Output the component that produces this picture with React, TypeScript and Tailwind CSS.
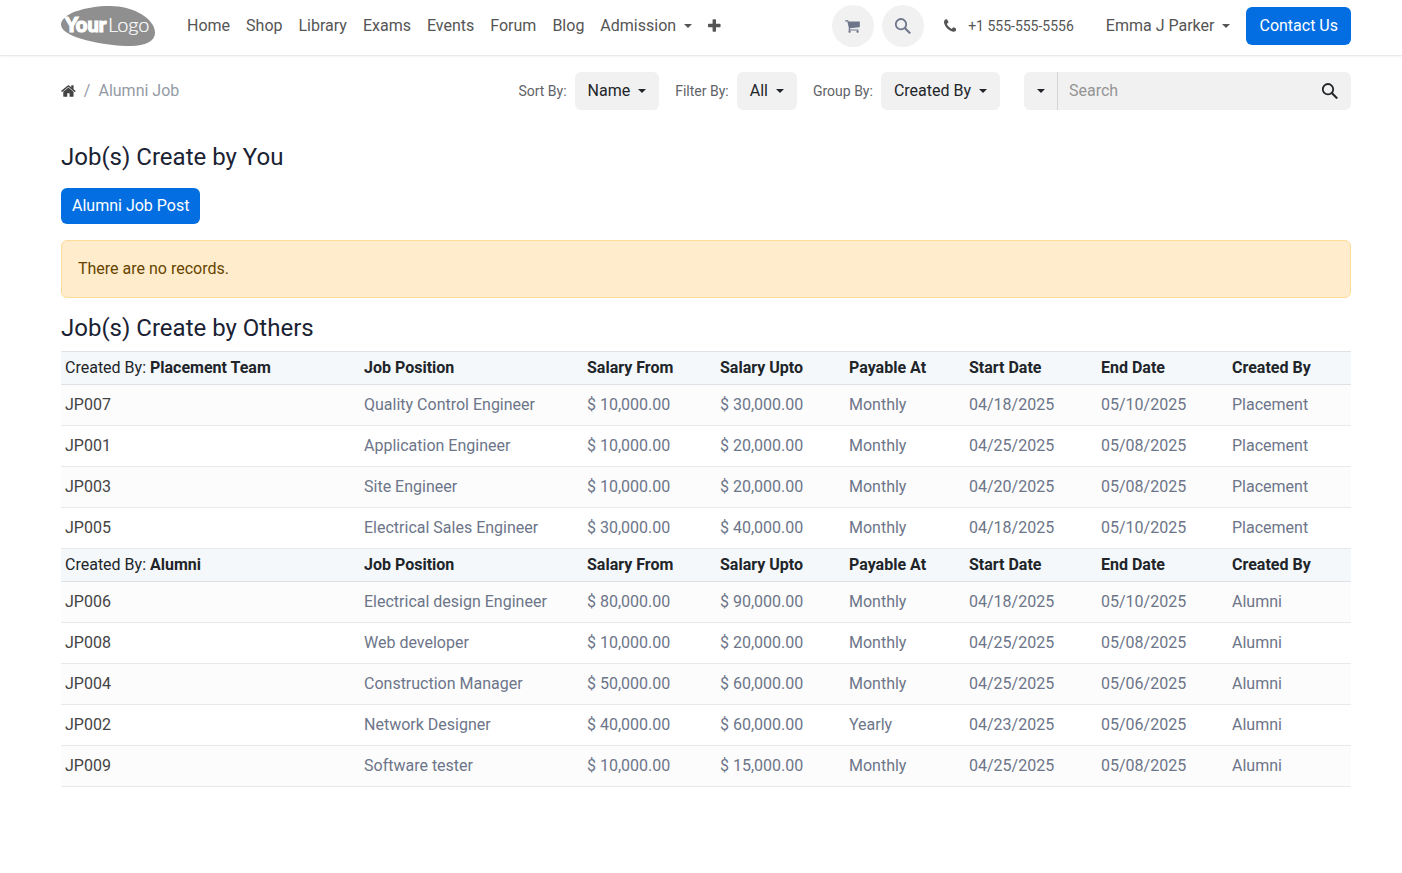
import React from "react";

type Job = {
  code: string;
  position: string;
  from: string;
  upto: string;
  payable: string;
  start: string;
  end: string;
};

type Group = { label: string; createdBy: string; jobs: Job[] };

const job = (
  code: string,
  position: string,
  from: string,
  upto: string,
  payable: string,
  start: string,
  end: string
): Job => ({ code, position, from, upto, payable, start, end });

const groups: Group[] = [
  {
    label: "Placement Team",
    createdBy: "Placement",
    jobs: [
      job("JP007", "Quality Control Engineer", "10,000.00", "30,000.00", "Monthly", "04/18/2025", "05/10/2025"),
      job("JP001", "Application Engineer", "10,000.00", "20,000.00", "Monthly", "04/25/2025", "05/08/2025"),
      job("JP003", "Site Engineer", "10,000.00", "20,000.00", "Monthly", "04/20/2025", "05/08/2025"),
      job("JP005", "Electrical Sales Engineer", "30,000.00", "40,000.00", "Monthly", "04/18/2025", "05/10/2025"),
    ],
  },
  {
    label: "Alumni",
    createdBy: "Alumni",
    jobs: [
      job("JP006", "Electrical design Engineer", "80,000.00", "90,000.00", "Monthly", "04/18/2025", "05/10/2025"),
      job("JP008", "Web developer", "10,000.00", "20,000.00", "Monthly", "04/25/2025", "05/08/2025"),
      job("JP004", "Construction Manager", "50,000.00", "60,000.00", "Monthly", "04/25/2025", "05/06/2025"),
      job("JP002", "Network Designer", "40,000.00", "60,000.00", "Yearly", "04/23/2025", "05/06/2025"),
      job("JP009", "Software tester", "10,000.00", "15,000.00", "Monthly", "04/25/2025", "05/08/2025"),
    ],
  },
];

const navLinks = ["Home", "Shop", "Library", "Exams", "Events", "Forum", "Blog"];
const columns = ["Job Position", "Salary From", "Salary Upto", "Payable At", "Start Date", "End Date", "Created By"];

const icons = {
  plus: {
    box: "192 0 1408 1792",
    path: "M1600 736v192q0 40-28 68t-68 28h-416v416q0 40-28 68t-68 28h-192q-40 0-68-28t-28-68v-416h-416q-40 0-68-28t-28-68v-192q0-40 28-68t68-28h416v-416q0-40 28-68t68-28h192q40 0 68 28t28 68v416h416q40 0 68 28t28 68z",
  },
  home: {
    box: "64 0 1664 1792",
    path: "M1472 992v480q0 26-19 45t-45 19h-384v-384h-256v384h-384q-26 0-45-19t-19-45v-480q0-1 .5-3t.5-3l575-474 575 474q1 2 1 6zm223-69l-62 74q-8 9-21 11h-3q-13 0-21-7l-692-577-692 577q-12 8-24 7-13-2-21-11l-62-74q-8-10-7-23.5t11-21.5l719-599q32-26 76-26t76 26l244 204v-195q0-14 9-23t23-9h192q14 0 23 9t9 23v408l219 182q10 8 11 21.5t-7 23.5z",
  },
  cart: {
    box: "64 0 1664 1792",
    path: "M704 1536q0 52-38 90t-90 38-90-38-38-90 38-90 90-38 90 38 38 90zm896 0q0 52-38 90t-90 38-90-38-38-90 38-90 90-38 90 38 38 90zm128-1088v512q0 24-16.5 42.5t-40.5 21.5l-1044 122q13 60 13 70 0 16-24 64h920q26 0 45 19t19 45-19 45-45 19h-1024q-26 0-45-19t-19-45q0-11 8-31.5t16-36 21.5-40 15.5-29.5l-177-823h-204q-26 0-45-19t-19-45 19-45 45-19h256q16 0 28.5 6.5t19.5 15.5 13 24.5 8 26 5.5 29.5 4.5 26h1201q26 0 45 19t19 45z",
  },
  phone: {
    box: "192 0 1408 1792",
    path: "M1600 1240q0 27-10 70.5t-21 68.5q-21 50-122 106-94 51-186 51-27 0-53-3.5t-57.5-12.5-47-14.5-55.5-20.5-49-18q-98-35-175-83-127-79-264-216t-216-264q-48-77-83-175-3-9-18-49t-20.5-55.5-14.5-47-12.5-57.5-3.5-53q0-92 51-186 56-101 106-122 25-11 68.5-21t70.5-10q14 0 21 3 18 6 53 76 11 19 30 54t35 63.5 31 53.5q3 4 17.5 25t21.5 35.5 7 28.5q0 20-28.5 50t-62 55-62 53-28.5 46q0 9 5 22.5t8.5 20.5 14 24 11.5 19q76 137 174 235t235 174q2 1 19 11.5t24 14 20.5 8.5 22.5 5q18 0 46-28.5t53-62 55-62 50-28.5q14 0 28.5 7t35.5 21.5 25 17.5q25 15 53.5 31t63.5 35 54 30q70 35 76 53 3 7 3 21z",
  },
};

function Icon({ name }: { name: keyof typeof icons }) {
  return (
    <svg viewBox={icons[name].box} className="h-4 w-auto shrink-0" fill="currentColor" aria-hidden="true">
      <path d={icons[name].path} />
    </svg>
  );
}

function SearchIcon() {
  return (
    <svg viewBox="0 0 16 16" className="size-4 shrink-0" fill="none" stroke="currentColor" strokeWidth="1.8" aria-hidden="true">
      <circle cx="6" cy="6.2" r="5.2" />
      <path d="M9.8 10L15.2 15.4" strokeWidth="2.1" />
    </svg>
  );
}

function Caret() {
  return <span className="inline-block border-x-4 border-t-4 border-x-transparent" aria-hidden="true" />;
}

function Logo() {
  return (
    <svg viewBox="0 0 94 40" className="h-10 w-[94px]" role="img" aria-label="Your Logo">
      <path
        d="M0 18.5C0 8 24 0 49 0C73 0 94 13 94 27C94 35 84 40 70 40C44 40 0 32 0 18.5Z"
        fill="#8f8f8f"
      />
      <text x="4" y="26" fontFamily="Lato, sans-serif" fontSize="20" fontWeight="900" fill="#fff" stroke="#fff" strokeWidth="1.2">
        Your
      </text>
      <text x="47" y="26" fontFamily="Lato, sans-serif" fontSize="20" fontWeight="300" fill="#fff" stroke="#fff" strokeWidth="0.2">
        Logo
      </text>
    </svg>
  );
}

function Picker({ label, value }: { label: string; value: string }) {
  const id = label.toLowerCase().replace(" ", "-");
  return (
    <div className="flex items-center gap-2">
      <label htmlFor={id} className="text-sm text-[#5f6368]">
        {label}:
      </label>
      <button id={id} type="button" className="flex h-[38px] items-center gap-2 rounded-md bg-[#f1f1f1] px-[13px] text-[#212529]">
        {value}
        <Caret />
      </button>
    </div>
  );
}

export default function App() {
  return (
    <div className="min-h-screen bg-white font-[Roboto,sans-serif] text-base text-[#212529]">
      <header className="flex h-14 items-start border-b border-[#ebebeb] pl-[61px] pr-[51px] shadow-[0_1px_2px_rgba(0,0,0,0.05)]">
        <div className="flex h-[52px] w-full items-center">
          <a href="#home" className="mr-8">
            <Logo />
          </a>
          <nav className="flex items-center gap-4 text-[#555]">
            {navLinks.map((link) => (
              <a key={link} href={"#" + link.toLowerCase()}>
                {link}
              </a>
            ))}
            <button type="button" className="flex items-center gap-2">
              Admission
              <Caret />
            </button>
            <button type="button" aria-label="More">
              <Icon name="plus" />
            </button>
          </nav>
          <div className="ml-auto flex items-center text-[#555]">
            <a href="#cart" aria-label="Cart" className="mr-2 flex size-[42px] items-center justify-center rounded-full bg-[#f1f1f1] text-[#6c7589]">
              <Icon name="cart" />
            </a>
            <button type="button" aria-label="Search the site" className="mr-5 flex size-[42px] items-center justify-center rounded-full bg-[#f1f1f1] text-[#6c7589]">
              <SearchIcon />
            </button>
            <a href="tel:+15555555556" className="mr-8 flex items-center gap-3 text-sm">
              <Icon name="phone" />
              +1 555-555-5556
            </a>
            <button type="button" className="mr-4 flex items-center gap-2">
              Emma J Parker
              <Caret />
            </button>
            <a href="#contact" className="flex h-[38px] items-center rounded-md bg-[#026ee1] px-[13px] text-white">
              Contact Us
            </a>
          </div>
        </div>
      </header>

      <main className="pl-[61px] pr-[51px] pt-4">
        <div className="flex items-center">
          <nav aria-label="Breadcrumb" className="flex items-center gap-2 text-[#949aa5]">
            <a href="#home" aria-label="Home" className="text-[#444]">
              <Icon name="home" />
            </a>
            <span>/</span>
            <span>Alumni Job</span>
          </nav>
          <div className="ml-auto flex items-center gap-4">
            <Picker label="Sort By" value="Name" />
            <Picker label="Filter By" value="All" />
            <Picker label="Group By" value="Created By" />
          </div>
          <form className="ml-6 flex h-[38px] w-[327px] overflow-hidden rounded-md bg-[#f1f1f1]">
            <button type="button" aria-label="Search options" className="flex w-[34px] items-center justify-center border-r border-[#d5d5d5]">
              <Caret />
            </button>
            <input
              type="text"
              aria-label="Search jobs"
              placeholder="Search"
              className="min-w-0 flex-1 bg-transparent px-[11px] outline-none placeholder:text-[#949494]"
            />
            <button type="submit" aria-label="Search" className="px-[13px]">
              <SearchIcon />
            </button>
          </form>
        </div>

        <h2 className="mb-4 mt-8 text-2xl leading-[30px] text-[#1a2233]">Job(s) Create by You</h2>
        <a href="#post" className="mb-4 flex h-9 w-fit items-center rounded-md bg-[#026ee1] px-[11px] text-white">
          Alumni Job Post
        </a>
        <div className="mb-4 rounded-md border border-[#ffdd99] bg-[#ffeccc] p-4 text-[#664500]">There are no records.</div>
        <h2 className="mb-2 text-2xl leading-[29px] text-[#1a2233]">Job(s) Create by Others</h2>

        <table className="w-full table-fixed border-separate border-spacing-0 border-t border-[#dee2e6] text-left">
          <colgroup>
            <col className="w-[299px]" />
            <col className="w-[223px]" />
            <col className="w-[133px]" />
            <col className="w-[129px]" />
            <col className="w-[120px]" />
            <col className="w-[132px]" />
            <col className="w-[131px]" />
            <col className="w-[123px]" />
          </colgroup>
          {groups.map((group) => (
            <tbody key={group.label}>
              <tr className="h-[33px] bg-[#f4f8fb]">
                <th scope="col" className="border-b border-[#dee2e6] px-1 font-normal">
                  Created By: <b className="font-bold">{group.label}</b>
                </th>
                {columns.map((column) => (
                  <th key={column} scope="col" className="border-b border-[#dee2e6] px-1 font-bold">
                    {column}
                  </th>
                ))}
              </tr>
              {group.jobs.map((row) => (
                <tr key={row.code} className="h-[41px] text-[#6c7589] even:bg-[#fcfcfc]">
                  <td className="border-b border-[#e7e9ed] px-1">
                    <a href={"#" + row.code} className="text-[#444]">
                      {row.code}
                    </a>
                  </td>
                  <td className="border-b border-[#e7e9ed] px-1">{row.position}</td>
                  <td className="border-b border-[#e7e9ed] px-1">$ {row.from}</td>
                  <td className="border-b border-[#e7e9ed] px-1">$ {row.upto}</td>
                  <td className="border-b border-[#e7e9ed] px-1">{row.payable}</td>
                  <td className="border-b border-[#e7e9ed] px-1">{row.start}</td>
                  <td className="border-b border-[#e7e9ed] px-1">{row.end}</td>
                  <td className="border-b border-[#e7e9ed] px-1">{group.createdBy}</td>
                </tr>
              ))}
            </tbody>
          ))}
        </table>
      </main>
    </div>
  );
}
